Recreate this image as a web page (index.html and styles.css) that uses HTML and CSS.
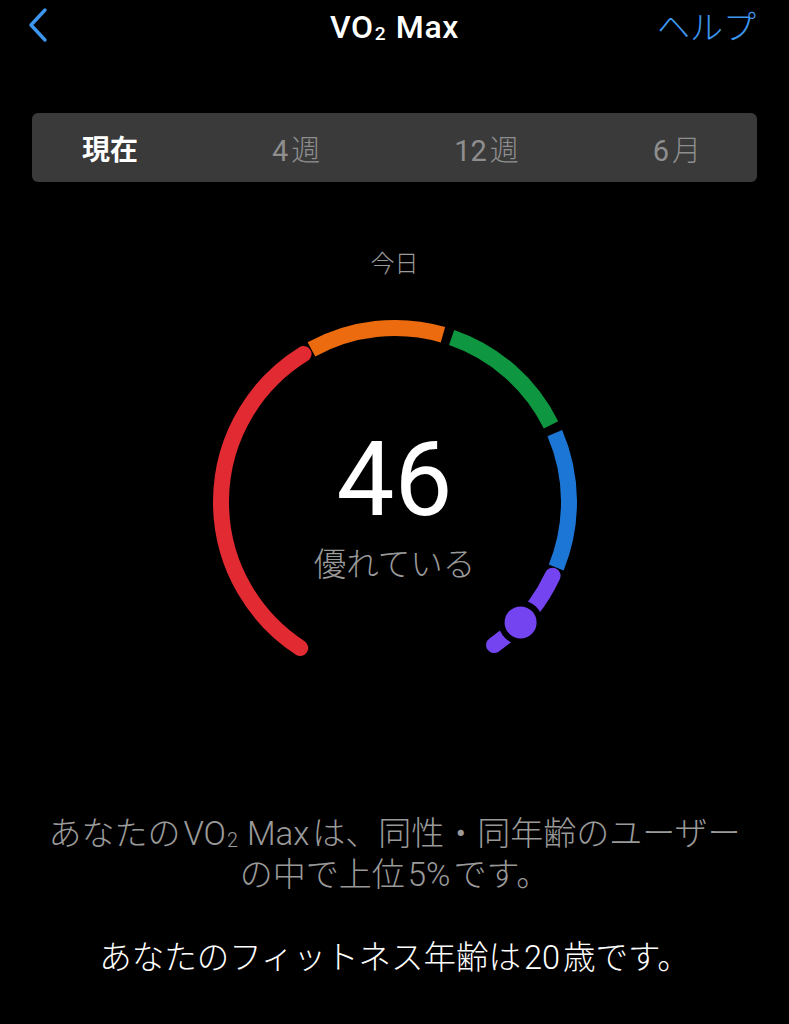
FILE: index.html
```html
<!DOCTYPE html>
<html lang="ja">
<head>
<meta charset="utf-8">
<title>VO2 Max</title>
<link rel="stylesheet" href="styles.css">
</head>
<body>
<div class="page">
  <header class="nav">
    <div class="nav-left">
      <svg class="back" width="20" height="36" viewBox="0 0 20 36"><path d="M17 3 L3 18 L17 33" fill="none" stroke="#3d96ef" stroke-width="3.4" stroke-linecap="round" stroke-linejoin="round"/></svg>
    </div>
    <h1 class="title">VO<span class="sub">2</span> Max</h1>
    <div class="nav-right"><span class="help">ヘルプ</span></div>
  </header>

  <nav class="segmented">
    <span class="seg active">現在</span>
    <span class="seg">4<span class="jp">週</span></span>
    <span class="seg">12<span class="jp">週</span></span>
    <span class="seg">6<span class="jp">月</span></span>
  </nav>

  <div class="today">今日</div>

  <div class="gauge">
    <svg width="400" height="380" viewBox="0 0 400 380">
      <g fill="none" stroke-width="16">
        <path d="M105.24 335.93 A174 174 0 0 1 108.56 41.96" stroke="#e12a31" stroke-linecap="round"/>
        <path d="M116.45 37.38 A174 174 0 0 1 247.95 22.73" stroke="#ec6b0f"/>
        <path d="M256.65 25.48 A174 174 0 0 1 355.99 112.90" stroke="#0e9740"/>
        <path d="M359.80 121.18 A174 174 0 0 1 361.21 255.46" stroke="#1c76d5"/>
        <path d="M357.57 263.81 A174 174 0 0 1 299.06 333.05" stroke="#7344ef" stroke-linecap="round"/>
      </g>
      <circle cx="325.6" cy="310.4" r="19" fill="#7344ef" stroke="#000" stroke-width="6"/>
    </svg>
    <div class="value">46</div>
    <div class="rating">優れている</div>
  </div>

  <p class="summary"><span class="line">あなたの<span class="lat">VO<span class="sub">2</span> Max</span>は、同性・同年齢のユーザー</span><span class="line">の中で上位<span class="lat">5%</span>です。</span></p>
  <p class="fitness"><span class="line">あなたのフィットネス年齢は<span class="lat">20</span>歳です。</span></p>
</div>
</body>
</html>
```

FILE: styles.css
```css
html, body {
  margin: 0;
  padding: 0;
  background: #000;
}
body {
  font-family: "Roboto", "Noto Sans CJK JP", sans-serif;
  color: #fff;
}
.page {
  width: 789px;
  height: 1024px;
  overflow: hidden;
}
.nav {
  height: 50px;
  display: grid;
  grid-template-columns: 1fr auto 1fr;
  align-items: center;
}
.nav-left {
  padding-left: 28px;
  display: flex;
  align-items: center;
  height: 44px;
}
.title {
  margin: 3px 0 0;
  font-size: 32px;
  font-weight: 500;
  letter-spacing: 0.6px;
  line-height: 44px;
  color: #fff;
}
.sub {
  font-size: 0.6em;
  line-height: 0;
  vertical-align: -0.12em;
  margin-left: 1px;
  margin-right: 1px;
}
.nav-right {
  display: flex;
  justify-content: flex-end;
  padding-right: 33px;
}
.help {
  color: #3d96ef;
  font-size: 33px;
  line-height: 44px;
  font-family: "Noto Sans CJK JP", sans-serif;
  font-weight: 300;
}
.segmented {
  margin: 63px 32px 0;
  height: 69px;
  background: #3a3a3a;
  border-radius: 6px;
  display: flex;
  align-items: center;
  justify-content: space-between;
  padding: 0 56px 0 50px;
}
.seg {
  font-size: 29px;
  color: #8e8e8e;
  font-weight: 400;
}
.seg .jp {
  font-family: "Noto Sans CJK JP", sans-serif;
  font-weight: 300;
  margin-left: 3px;
}
.seg.active {
  color: #fff;
  font-size: 28px;
  font-weight: 700;
  font-family: "Noto Sans CJK JP", sans-serif;
}
.today {
  margin-top: 65px;
  text-align: center;
  font-size: 24px;
  line-height: 30px;
  color: #9a9a9a;
  font-family: "Noto Sans CJK JP", sans-serif;
  font-weight: 300;
}
.gauge {
  position: relative;
  width: 400px;
  height: 380px;
  margin: 35px auto 0;
}
.gauge svg {
  display: block;
}
.value {
  position: absolute;
  left: 0;
  right: 0;
  top: 113px;
  text-align: center;
  font-size: 103px;
  line-height: 110px;
  font-weight: 400;
  color: #fff;
}
.rating {
  position: absolute;
  left: 0;
  right: 0;
  top: 230px;
  text-align: center;
  font-size: 32.5px;
  line-height: 40px;
  color: #9a9a9a;
  font-family: "Noto Sans CJK JP", sans-serif;
  font-weight: 300;
}
.summary, .fitness {
  margin: 0;
  text-align: center;
  font-size: 33px;
  font-family: "Noto Sans CJK JP", sans-serif;
  font-weight: 300;
}
.summary {
  margin-top: 119px;
  color: #9a9a9a;
}
.fitness {
  margin-top: 41px;
  color: #fff;
  font-size: 32.5px;
}
.line {
  display: block;
  height: 41px;
  line-height: 41px;
  white-space: nowrap;
}
.lat {
  font-family: "Roboto", sans-serif;
  font-weight: 300;
  margin: 0 3px;
}
```
